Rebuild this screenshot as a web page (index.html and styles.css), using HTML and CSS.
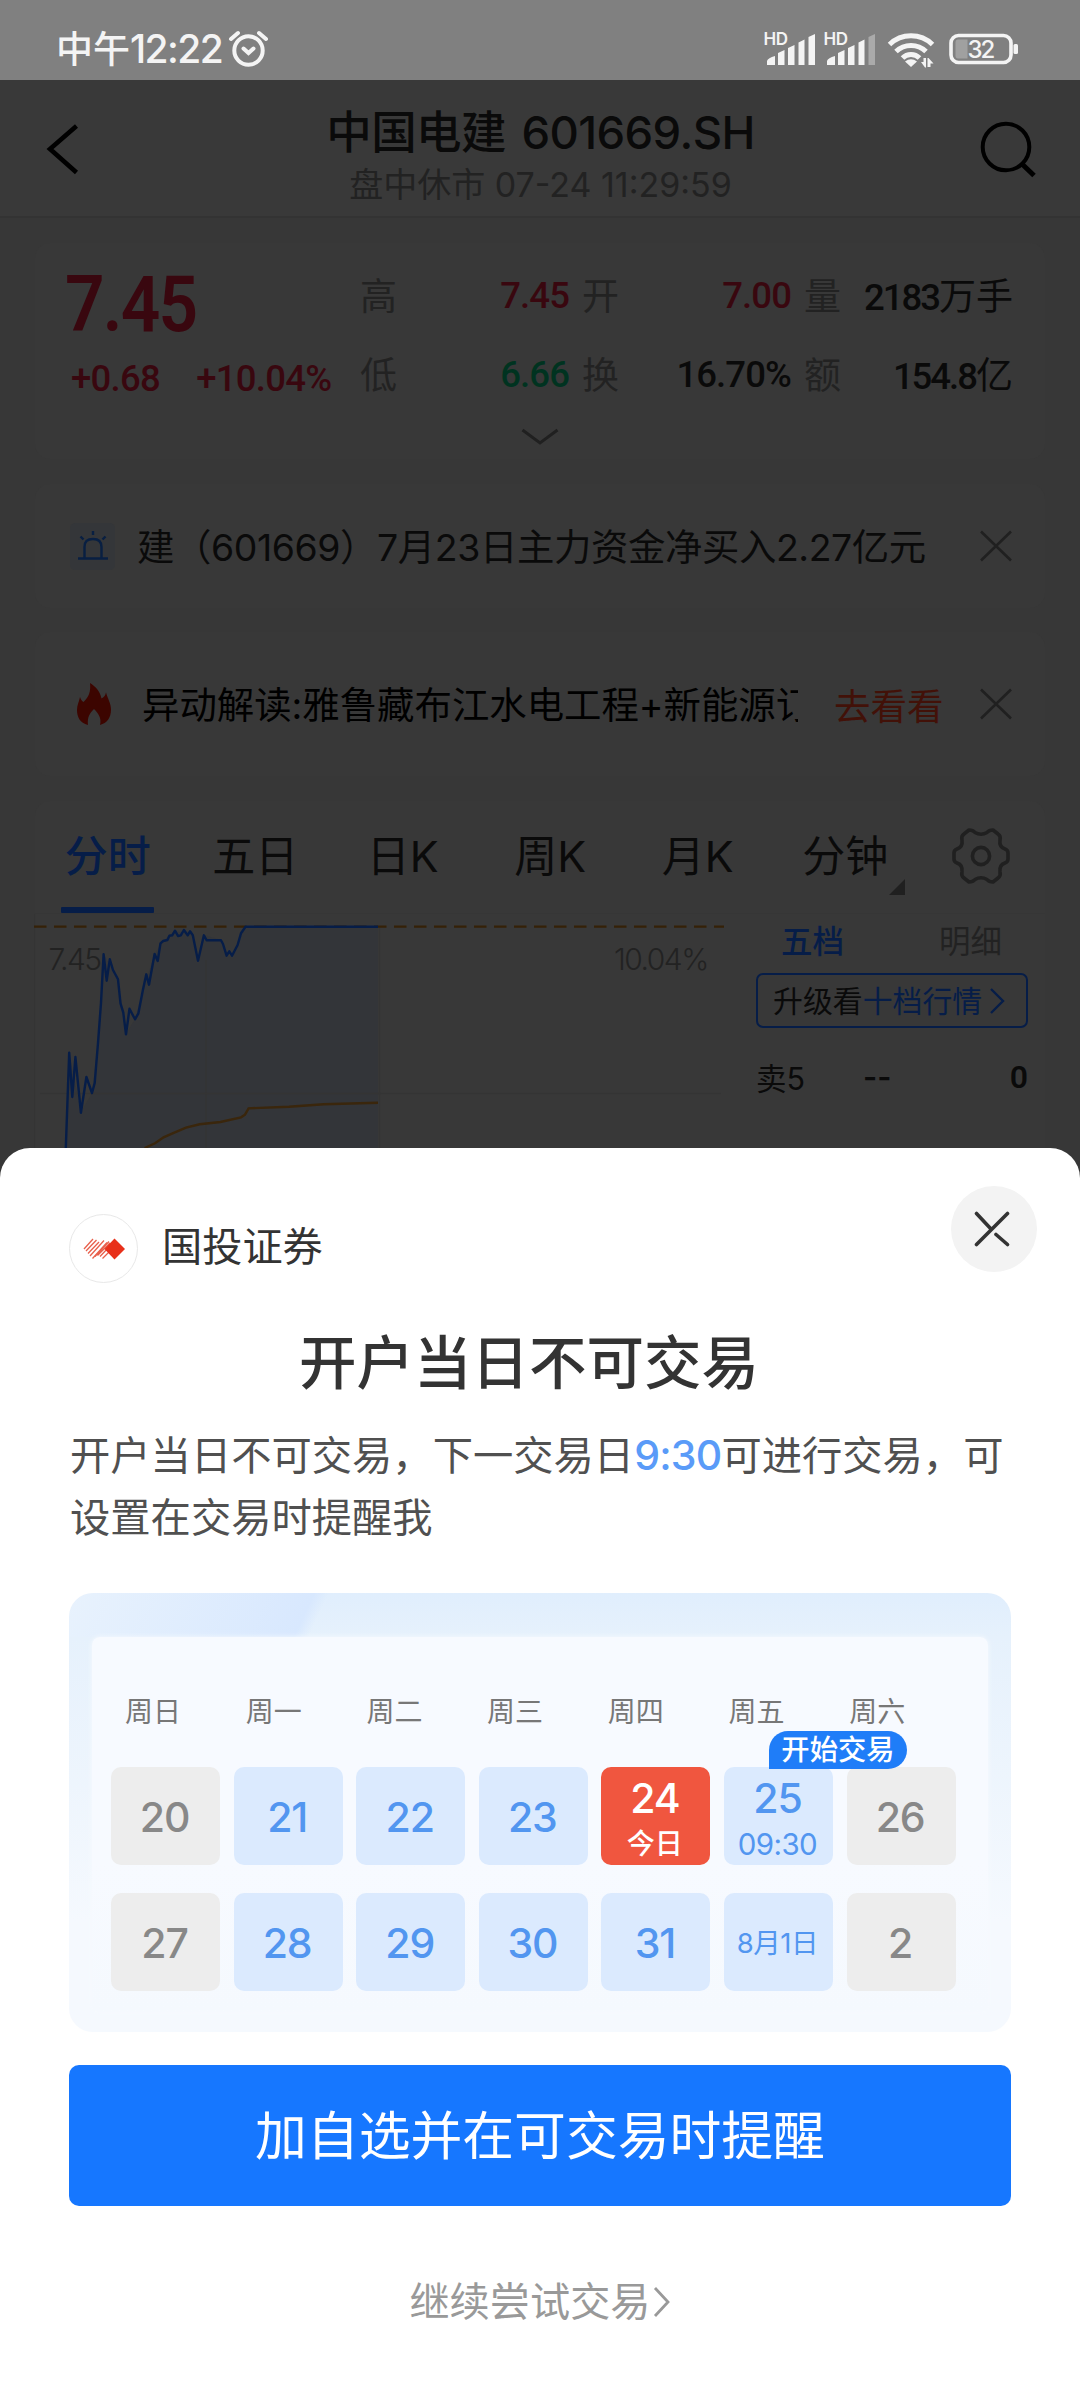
FILE: index.html
```html
<!DOCTYPE html>
<html lang="zh-CN">
<head>
<meta charset="utf-8">
<title>中国电建 601669.SH</title>
<link rel="stylesheet" href="styles.css">
</head>
<body>
<div class="screen">
  <header class="status">
    <div class="clock">中午<span class="clock-num">12:22</span></div>
    <svg class="alarm" width="42" height="40" viewBox="227 29 42 40" fill="none" stroke="#f4f4f4" stroke-width="4" stroke-linecap="round">
      <circle cx="248.5" cy="50.500" r="14.200"/>
      <path d="M243.500 48.500l5 4.500 5-4.500M231 39l7-6M266 39l-7-6"/>
    </svg>
    <svg class="signals" width="262" height="48" viewBox="762 24 262 48" fill="#f4f4f4">
      <text class="hd" x="763.500" y="45">HD</text>
      <path d="M767 65v-4q1-3 8-5v9zM778 65V53l6.500-3v15zM788 65V48l6.500-3v20zM798.500 65V42.500l6-3v25.500zM808.500 65V37l6.500-3v31z"/>
      <text class="hd" x="823.500" y="45">HD</text>
      <path d="M827 65v-4q1-3 8-5v9zM838 65V53l6.500-3v15zM848 65V48l6.500-3v20zM858.500 65V42.500l6-3v25.500z"/>
      <path fill="#aaa" d="M868.500 65V37l6.500-3v31z"/>
      <g fill="none" stroke="#f4f4f4" stroke-width="5">
        <path d="M889.500 44.500a31 31 0 0 1 43 0M896 51.500a21.500 21.500 0 0 1 30 0M902.500 58a12 12 0 0 1 17 0"/>
      </g>
      <path d="M905 61.500q6-4.500 12 0l-6 5.500z"/>
      <path d="M921 62h2.500v-4h2.500v9.500h-1zM927.500 67v-9h1l5 5.500h-3v3.500z"/>
      <rect x="951" y="35.500" width="60" height="27" rx="7.500" fill="none" stroke="#f4f4f4" stroke-width="3.600"/>
      <path fill="#a0a0a0" d="M958 39.500h9.500v19H958q-2.500 0-2.500-3v-13q0-3 2.500-3z"/>
      <rect x="1013.500" y="44" width="4.500" height="10" rx="1.500"/>
      <text class="batt" x="967.500" y="58">32</text>
    </svg>
  </header>

  <nav class="topbar">
    <svg width="36" height="52" viewBox="44 123 36 52" fill="none" stroke="#000" stroke-width="4.600"><path d="M76.500 126L50 149l26.500 23.500" /></svg>
    <div class="heading">
      <h1>中国电建 601669.SH</h1>
      <p>盘中休市 07-24 11:29:59</p>
    </div>
    <svg width="58" height="58" viewBox="979 119 58 58" fill="none" stroke="#000" stroke-width="4"><circle cx="1006" cy="146" r="23.300"/><path d="M1022 163l12 11.500" stroke-width="5"/></svg>
  </nav>

  <main class="content">
    <section class="card quote">
      <div class="price">
        <div class="last">7.45</div>
        <div class="chg"><span>+0.68</span><span>+10.04%</span></div>
      </div>
      <dl class="stats">
        <div><dt>高</dt><dd class="up">7.45</dd></div>
        <div><dt>开</dt><dd class="up">7.00</dd></div>
        <div><dt>量</dt><dd class="unit">2183<i>万手</i></dd></div>
        <div><dt>低</dt><dd class="down">6.66</dd></div>
        <div><dt>换</dt><dd>16.70%</dd></div>
        <div><dt>额</dt><dd class="unit">154.8<i>亿</i></dd></div>
      </dl>
      <svg class="more" width="38" height="18" viewBox="0 0 38 18" fill="none" stroke="#202020" stroke-width="3"><path d="M1.500 2L19 15 36.500 2"/></svg>
    </section>

    <section class="card alert">
      <span class="bell">
        <svg width="30" height="30" viewBox="0 0 30 30" fill="none" stroke="#081f42" stroke-width="2.400"><path d="M6.500 27V16q0-8 8.500-8t8.500 8v11M0 27.500h30M15 0v4M2.500 5.500l3 3M27.500 5.500l-3 3"/></svg>
      </span>
      <p class="msg">建（601669）7月23日主力资金净买入2.27亿元</p>
      <svg class="x" width="34" height="32" viewBox="0 0 34 32" fill="none" stroke="#202020" stroke-width="2.600"><path d="M2 1.500l30 29M32 1.500l-30 29"/></svg>
    </section>

    <section class="card alert hot">
      <svg class="fire" width="34" height="42" viewBox="0 0 34 42" fill="#3c0500"><path d="M13 0c5 3 10 8 11.500 15.500Q28 14 29 9.500c2 7 5 11 5 17C34 35 30 40 23 42c2-7-2-12-6-16-4 4-7 8-6 16C3 40 0 34 0 27c0-5 2-8 3-13 1 3 2 4 3.500 5C12 14 14 8 13 0z"/></svg>
      <p class="msg">异动解读:雅鲁藏布江水电工程+新能源订单</p>
      <a class="go">去看看</a>
      <svg class="x" width="34" height="32" viewBox="0 0 34 32" fill="none" stroke="#202020" stroke-width="2.600"><path d="M2 1.500l30 29M32 1.500l-30 29"/></svg>
    </section>

    <section class="card market">
      <div class="tabs">
        <span class="tab on">分时</span><span class="tab">五日</span><span class="tab">日K</span><span class="tab">周K</span><span class="tab">月K</span><span class="tab drop">分钟</span>
        <svg class="gear" width="60" height="60" viewBox="-30 -30 60 60" fill="none" stroke="#202020" stroke-width="3.600" stroke-linejoin="round">
          <path d="M-12-26Q-8-26-6-23.500Q0-20 6-23.500Q8-26 12-26L17-22Q20-20 19-16Q18-9 24-7Q27-6 27-3V3Q27 6 24 7Q18 9 19 16Q20 20 17 22L12 26Q8 26 6 23.500Q0 20-6 23.500Q-8 26-12 26L-17 22Q-20 20-19 16Q-18 9-24 7Q-27 6-27 3V-3Q-27-6-24-7Q-18-9-19-16Q-20-20-17-22Z"/>
          <circle r="8.600"/>
        </svg>
      </div>
      <div class="panel">
        <svg class="chart" width="690" height="234" viewBox="34 914 690 234" fill="none">
          <path fill="#333539" d="M65.800 1148L69.200 1053 81 1112 92 1093 98 1043 103.600 954 118 979 126 1034 135 1019 143 990 154.600 954 163 941 175 931 193 935 198 960 204 935 221 940 227 956 232 956 245.500 927H378V1148z"/>
          <path stroke="#343434" stroke-width="1.500" d="M34.500 914V1148M206 960V1148M379.500 928V1148M40 1093.500H721"/>
          <path stroke="#352107" stroke-width="2.200" stroke-dasharray="12.500 7.500" d="M34 926.700H724"/>
          <text class="axis" x="48.500" y="970">7.45</text>
          <text class="axis" x="614" y="970">10.04%</text>
          <path stroke="#3a260c" stroke-width="2.400" d="M144.600 1148L155 1143.300 163.600 1137.300 172 1133.700 186 1127.700 199.700 1124.300 220.400 1122 241 1117.300 245 1114.700 248.600 1108.300 289 1106.700 323.700 1104.300 378 1102.700"/>
          <path stroke="#061d48" stroke-width="2.400" stroke-linejoin="round" d="M65.800 1148L69.200 1052.700 72.300 1097 75.400 1057 80.900 1112.700 86.400 1077 92 1093 94.700 1083 98 1043 101 1003 103.600 954.300 106.700 980.700 109.800 959.300 113 970 118 979.300 120.500 1003.300 123.300 1012.700 126 1034.300 129.500 1008.700 135 1019.300 138.400 1013.300 142.900 990 146.300 974.300 149 984.700 154.600 954 157.700 961 160.500 943.300 163.200 941 167.400 940 169.400 935.700 172.200 935.300 175 930.700 178 936 180.800 935.300 183.900 930 187.700 935.300 190 931.300 192.800 935.300 198 960.700 203.900 935.300 206.600 940.300 221 940.300 223 944 226.600 955.700 229.300 951.300 232 955.700 237.600 945 241 933.300 245.500 926.700H378"/>
        </svg>
        <div class="book">
          <div class="book-tabs"><span class="on">五档</span><span>明细</span></div>
          <a class="upgrade">升级看<b>十档行情</b><svg width="16" height="26" viewBox="0 0 16 26" fill="none" stroke="#061d48" stroke-width="2.400"><path d="M2 1l12 12L2 25"/></svg></a>
          <div class="row"><span>卖5</span><span class="dash">--</span><span class="vol">0</span></div>
          <div class="row"><span>卖4</span><span class="dash">--</span><span class="vol">0</span></div>
        </div>
      </div>
    </section>
  </main>

  <section class="sheet">
    <div class="sheet-head">
      <span class="logo">
        <svg width="42" height="22" viewBox="0 0 42 22">
          <g fill="none" stroke="#e8604c" stroke-width="1.300"><path d="M1 11L10 1M3 13L13.500 2M5 15.500L16 4M7 18L21 2.500M9.500 20.500L24 4.500M12 18.500L26 3.500M14.500 17.500L27 5M17 18.500L26 9M19.500 20.500L27 13"/></g>
          <path fill="#e8301a" d="M31.500.5L42 11 31.500 21.500 21.500 11z"/>
        </svg>
      </span>
      <span class="broker">国投证券</span>
      <button class="close" aria-label="关闭">
        <svg width="36" height="36" viewBox="0 0 36 36" fill="none" stroke="#333" stroke-width="3.600" stroke-linecap="round"><path d="M2.500 2.500L17 18M33.500 2.500l-31 31M22 23.500l11.500 10"/></svg>
      </button>
    </div>
    <h2>开户当日不可交易</h2>
    <p class="desc">开户当日不可交易，下一交易日<em>9:30</em>可进行交易，可设置在交易时提醒我</p>

    <div class="calendar">
      <div class="weekdays"><span>周日</span><span>周一</span><span>周二</span><span>周三</span><span>周四</span><span>周五</span><span>周六</span></div>
      <div class="days">
        <div class="day off">20</div><div class="day">21</div><div class="day">22</div><div class="day">23</div>
        <div class="day today">24<small>今日</small></div>
        <div class="day start">25<small>09:30</small><span class="badge">开始交易</span></div>
        <div class="day off">26</div>
        <div class="day off">27</div><div class="day">28</div><div class="day">29</div><div class="day">30</div><div class="day">31</div>
        <div class="day month">8月1日</div><div class="day off">2</div>
      </div>
    </div>

    <button class="primary">加自选并在可交易时提醒</button>
    <a class="skip">继续尝试交易<svg width="18" height="32" viewBox="0 0 18 32" fill="none" stroke="#999" stroke-width="2.800"><path d="M2 2l13 14L2 30"/></svg></a>
  </section>
</div>
</body>
</html>
```
FILE: styles.css
```css
* { box-sizing: border-box; margin: 0; padding: 0; }
body { background: #373737; }
.screen {
  width: 1080px; height: 2400px; overflow: hidden;
  display: flex; flex-direction: column;
  background: #373737; color: #0a0a0a;
  font-family: Inter, "Noto Sans CJK SC", sans-serif;
}
svg { display: block; flex: none; }
i, em { font-style: normal; }
button { border: 0; font-family: inherit; }

.status {
  flex: none; height: 80px; padding: 0 56px;
  display: flex; align-items: center; background: #808080; color: #f4f4f4;
}
.clock { width: 171px; font-size: 37px; line-height: 50px; font-weight: 500; white-space: nowrap; padding-top: 18px; }
.clock-num { font-size: 39px; letter-spacing: -1.6px; }
.alarm { margin-top: 18px; }
.signals { margin-left: auto; margin-top: 16px; }
.hd { font-size: 17px; font-weight: 600; letter-spacing: -.5px; }
.batt { font-size: 24px; font-weight: 500; letter-spacing: -2px; }

.topbar {
  flex: none; height: 138px; padding: 2px 43px 0 44px;
  display: flex; justify-content: space-between; align-items: center;
  background: #393939; border-bottom: 2px solid #333;
}
.heading { text-align: center; margin-left: 22px; padding-top: 13px; }
.heading h1 { font-size: 45.500px; line-height: 56px; font-weight: 500; white-space: nowrap; letter-spacing: -.6px; word-spacing: 4px; }
.heading p { font-size: 34px; line-height: 44px; color: #222; white-space: nowrap; margin-top: 2px; }

.content { height: 960px; flex: none; overflow: hidden; padding: 25px 35px 0; display: flex; flex-direction: column; }
.card { flex: none; background: #383838; border-radius: 15px; }

.quote { height: 216px; padding: 13px 33px 0 30px; display: grid; grid-template-columns: 296px 1fr; grid-template-rows: 168px 20px; }
.price, .stats dd { font-family: Roboto, "Noto Sans CJK SC", sans-serif; }
.last { font-size: 77px; line-height: 92px; font-weight: 600; letter-spacing: -2px; color: #39070f; transform: scaleX(.9); transform-origin: left; padding-top: 3px; }
.chg { display: flex; gap: 36px; padding-left: 6px; font-size: 36.500px; line-height: 46px; font-weight: 500; letter-spacing: -.7px; color: #39070f; margin-top: 5px; white-space: nowrap; }
.stats { display: grid; grid-template-columns: repeat(3, 209px); column-gap: 13px; grid-auto-rows: 79px; margin-left: -1px; }
.stats > div { display: flex; justify-content: space-between; align-items: center; white-space: nowrap; }
.stats dt { font-size: 37px; color: #222; margin-top: -4px; }
.stats dd { font-size: 36.500px; font-weight: 500; letter-spacing: -.9px; }
.stats dd i { font-size: 37px; font-weight: 400; letter-spacing: 0; }
.stats .unit { letter-spacing: -2px; margin-top: -4px; }
.stats .up { color: #39070f; }
.stats .down { color: #003320; }
.more { grid-column: 1 / 3; justify-self: center; margin-left: 2px; margin-top: 4px; }

.alert { height: 124px; margin-top: 25px; padding: 0 32px 0 35px; display: flex; align-items: center; }
.bell { width: 45px; height: 47px; border-radius: 5px; background: #343639; display: flex; align-items: center; justify-content: center; }
.msg { width: 790px; margin-left: 22px; font-size: 37.400px; line-height: 50px; white-space: nowrap; overflow: hidden; padding-top: 3px; letter-spacing: -.4px; }
.x { margin-left: auto; }
.alert.hot { height: 144px; margin-top: 24px; padding-left: 42px; color: #000; }
.hot .msg { width: 656px; margin-left: 31px; letter-spacing: 0; }
.go { margin-left: 36px; font-size: 36.500px; color: #421108; }

.market { height: 400px; margin-top: 25px; }
.tabs { display: flex; height: 113px; border-bottom: 1px solid #363636; margin-left: -1px; }
.tab { width: 147.500px; height: 112px; line-height: 110px; text-align: center; font-size: 43px; position: relative; }
.tab.on { color: #061d48; font-weight: 500; }
.tab.on::after { content: ""; position: absolute; left: 27px; bottom: 0; width: 93px; height: 6px; border-radius: 1px; background: #061d48; }
.drop::after { content: ""; position: absolute; right: 14px; bottom: 18px; border-left: 16px solid transparent; border-bottom: 16px solid #202020; }
.gear { margin: 25px 0 0 32px; }
.panel { display: flex; margin-left: -1px; height: 286px; }
.axis { fill: #222; font-size: 30px; letter-spacing: -1.500px; font-weight: 300; }
.book { width: 272px; margin-left: 32px; }
.book-tabs { display: flex; justify-content: space-between; padding: 5px 26px 0 25px; height: 59px; font-size: 31.500px; line-height: 46px; color: #222; }
.book-tabs .on { color: #061d48; font-weight: 500; }
.upgrade { height: 55px; border: 2px solid #061d48; border-radius: 7px; display: flex; align-items: center; padding: 0 0 3px 15px; font-size: 29.900px; white-space: nowrap; }
.upgrade b { font-weight: 400; color: #061d48; }
.upgrade svg { margin: 3px 0 0 7px; }
.row { display: flex; height: 84px; align-items: center; font-size: 30.500px; padding-top: 13px; }
.dash { margin-left: 58px; font-weight: 600; }
.vol { margin-left: auto; font-weight: 600; font-family: Roboto, sans-serif; font-size: 32px; }

.sheet { flex: 1; margin-top: -30px; position: relative; background: #fff; border-radius: 30px 30px 0 0; padding: 38px 69px 0; color: #333; }
.sheet-head { display: flex; height: 124px; margin-right: -26px; }
.logo { width: 69px; height: 69px; margin-top: 28px; border: 1.500px solid #e8e8e8; border-radius: 50%; display: flex; align-items: center; justify-content: center; }
.broker { margin-left: 24px; font-size: 40.200px; line-height: 60px; margin-top: 31px; }
.close { width: 86px; height: 86px; margin-left: auto; border-radius: 50%; background: #f3f3f3; display: flex; align-items: center; justify-content: center; padding-right: 4px; }
.sheet h2 { margin-top: 18px; padding-right: 22px; text-align: center; font-size: 57.500px; line-height: 70px; font-weight: 500; }
.desc { margin-top: 26px; margin-right: -20px; padding-left: 1px; font-size: 40.300px; line-height: 62px; color: #505050; }
.desc em { color: #5a9bf8; font-weight: 500; font-size: 41px; letter-spacing: -.8px; }

.calendar {
  margin-top: 44px; height: 439px; border-radius: 24px; padding: 95px 0 0 42px; position: relative; z-index: 0;
  background: linear-gradient(115deg, #e8f2fd 0, #d8e8fe 25.500%, transparent 27%) 0 0 / 100% 44px no-repeat, linear-gradient(#e0eefd, #e6f1fc 10%, #f5f9fe 75%);
}
.calendar::before { content: ""; position: absolute; z-index: -1; left: 23px; top: 44px; right: 23px; bottom: 20px; border-radius: 8px; background: linear-gradient(#f7faff 60%, #f5f9fe); box-shadow: 0 0 5px #f7faff; }
.weekdays { display: flex; padding-left: 14px; }
.weekdays span { flex: none; width: 120.700px; font-size: 28px; line-height: 48px; color: #777; }
.days { display: grid; grid-template-columns: repeat(7, 109px); column-gap: 13.600px; row-gap: 28px; margin-top: 31px; }
.day {
  height: 98px; border-radius: 10px; background: #dbeafe; color: #5296f0; position: relative;
  display: flex; flex-direction: column; align-items: center; justify-content: center;
  font-size: 41px; line-height: 48px; font-weight: 500; letter-spacing: -1.200px; padding: 1px 2px 0 0;
}
.day small { font-size: 28px; line-height: 44px; letter-spacing: 0; }
.day.start small { font-size: 29.500px; font-weight: 400; letter-spacing: -.6px; }
.day.off { background: #ededed; color: #888; }
.day.today { background: #f0563f; color: #fff; }
.day.today, .day.start { padding-top: 7px; }
.day.month { font-size: 27.500px; font-weight: 400; letter-spacing: -.5px; }
.badge { position: absolute; left: 45px; top: -36px; width: 138px; height: 38px; border-radius: 19px 19px 19px 0; background: #1f7df8; color: #fff; font-size: 28.300px; line-height: 38px; text-align: center; letter-spacing: 0; z-index: 1; }

.primary { display: block; width: 942px; height: 141px; margin-top: 33px; border-radius: 10px; background: #1677ff; color: #fff; font-size: 51.800px; line-height: 140px; white-space: nowrap; }
.skip { display: flex; justify-content: center; align-items: center; gap: 2px; margin-top: 66px; font-size: 40.200px; line-height: 60px; color: #999; }
```
